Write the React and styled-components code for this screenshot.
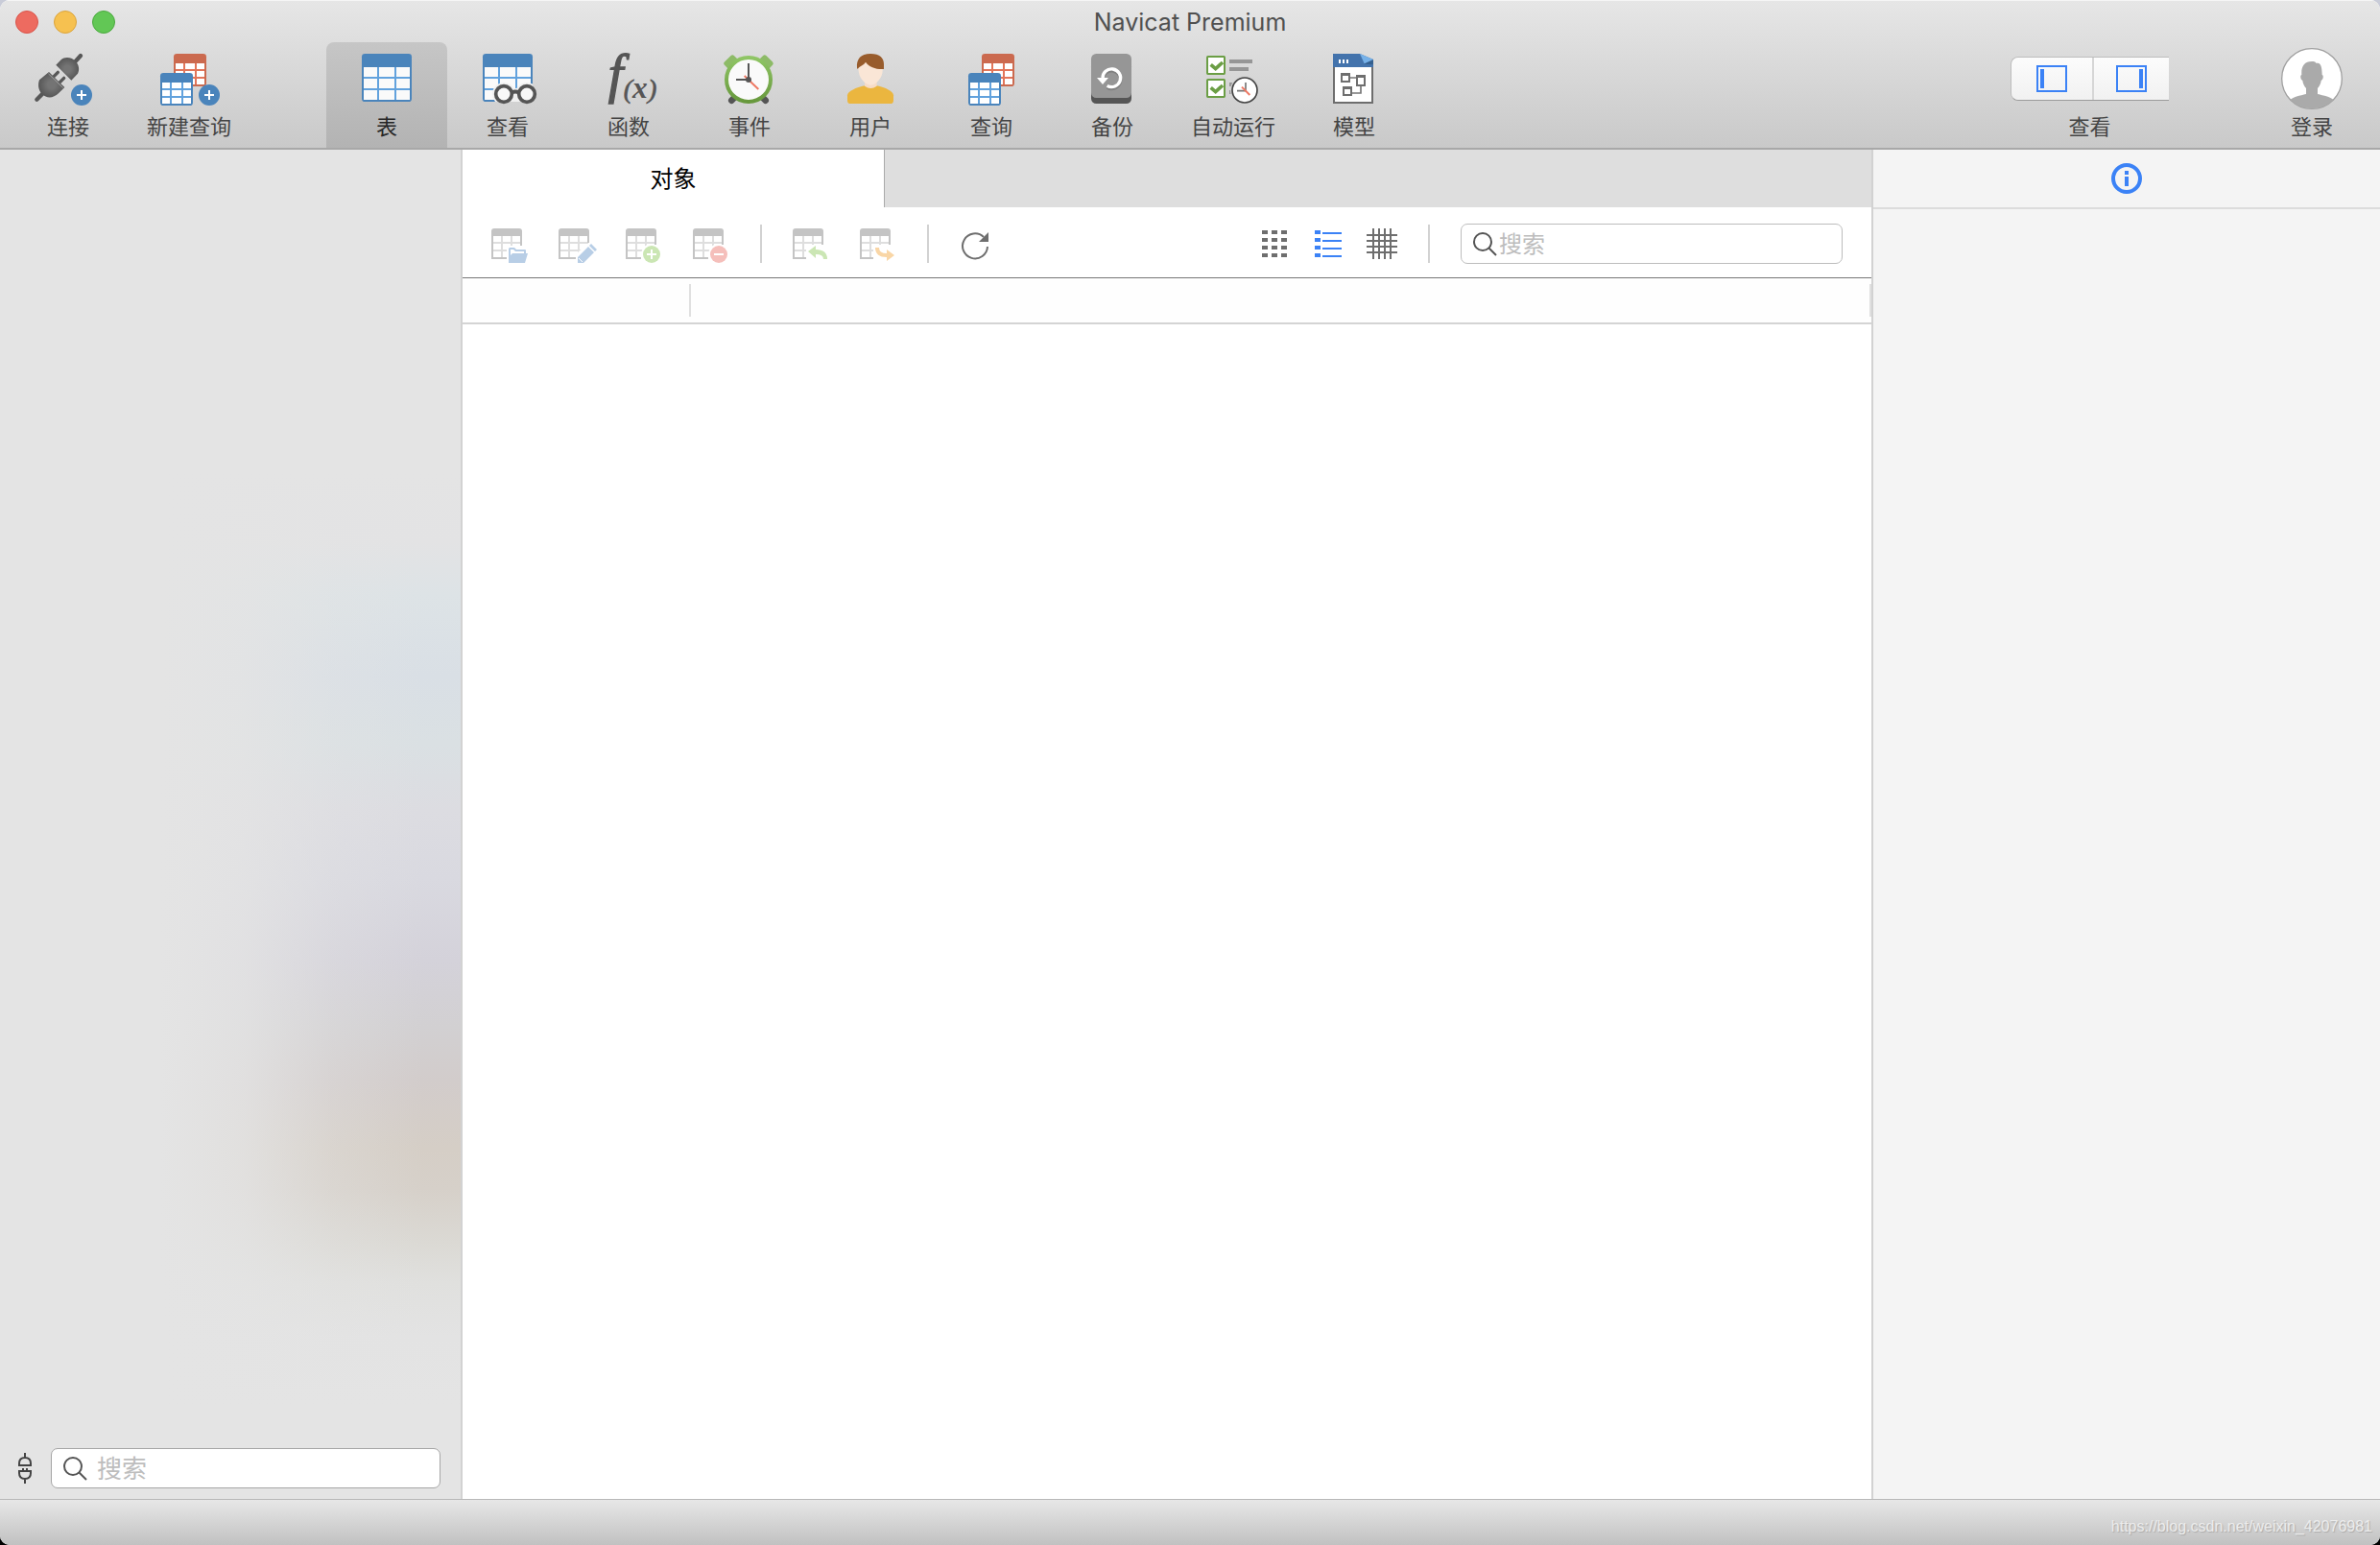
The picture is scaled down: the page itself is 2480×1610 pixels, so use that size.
import React from 'react'
import styled, { createGlobalStyle } from 'styled-components'

const GlobalStyle = createGlobalStyle`
    * { box-sizing: border-box; }
    body {
        margin: 0;
        background: linear-gradient(#c9ccd8 50%, #000 50%);
        font-family: Inter, "Noto Sans CJK SC", sans-serif;
    }
    button, input { font: inherit; }
    svg { display: block; overflow: visible; }
`

const Window = styled.div`
    min-height: 100vh;
    display: flex;
    flex-direction: column;
    background: #fff;
    border-radius: 10px;
    overflow: hidden;
`

// 顶部
const Header = styled.header`
    background: linear-gradient(#e6e6e6, #c9c9c9);
    border-top: 1px solid #f5f5f5;
    border-bottom: 2px solid #a8a8a8;
`

const TitleBar = styled.div`
    display: grid;
    grid-template-columns: 1fr auto 1fr;
    align-items: center;
    height: 43px;
    padding: 0 16px;
`

const Lights = styled.div`
    display: flex;
    gap: 16px;
`

const Light = styled.button`
    width: 24px;
    height: 24px;
    padding: 0;
    border-radius: 50%;
    border: 1px solid ${(props) => props.$edge};
    background: ${(props) => props.$color};
`

const Title = styled.h1`
    margin: 0;
    font-size: 25px;
    line-height: 32px;
    font-weight: 400;
    color: #505050;
`

const Toolbar = styled.nav`
    display: flex;
    height: 110px;
    padding: 0 8px;
`

const Space = styled.div`
    width: ${(props) => props.$width || 'auto'};
    flex: ${(props) => (props.$width ? 'none' : 1)};
`

const ToolButton = styled.button`
    display: grid;
    grid-template-rows: 72px 32px;
    justify-items: center;
    align-content: start;
    width: 126px;
    padding: 0;
    border: 0;
    border-radius: 8px 8px 0 0;
    background: ${(props) => (props.$active ? 'linear-gradient(#c6c6c6, #b3b3b3)' : 'none')};
    color: ${(props) => (props.$active ? '#262626' : '#444')};
    font-size: 22px;
    line-height: 32px;
    white-space: nowrap;
`

const ViewGroup = styled.div`
    display: grid;
    grid-template-rows: 72px 32px;
    justify-items: center;
    align-items: center;
    align-content: start;
    margin-right: 86px;
    font-size: 22px;
    line-height: 32px;
    color: #444;
`

const Segment = styled.div`
    display: flex;
    height: 46px;
    margin-top: 4px;
    border: 1px solid #bdbdbd;
    border-bottom-color: #9c9c9c;
    border-right: 0;
    border-radius: 8px 0 0 8px;
    overflow: hidden;
`

const SegmentButton = styled.button`
    display: grid;
    place-items: center;
    width: ${(props) => props.$width};
    padding: 0;
    border: 0;
    border-right: ${(props) => (props.$divided ? '2px solid #d6d6d6' : '0')};
    background: linear-gradient(#fcfcfc, #f1f1f1);
`

// 主体
const Body = styled.div`
    flex: 1;
    display: grid;
    grid-template-columns: 482px 1fr 528px;
`

const Sidebar = styled.aside`
    display: flex;
    align-items: flex-end;
    min-width: 0;
    padding: 0 21px 11px 19px;
    border-right: 2px solid #d2d2d2;
    background:
        linear-gradient(90deg, #e4e4e4 35%, rgba(228, 228, 228, 0.8) 53%, rgba(228, 228, 228, 0.3) 72%, transparent 92%),
        linear-gradient(
            #e4e4e4 24%, #e3e3e4 29%, #dde3e6 33%, #d9dfe5 39%, #dae0e3 44%, #dcdce1 49%,
            #d9d9e0 54%, #d4d2da 60%, #d2d0d2 65%, #d2cccb 69%, #d5cec6 74%, #d6d0c9 77%,
            #dbd9d4 81%, #e0e0de 84%, #e3e3e3 88%, #e4e4e4 93%
        );
`

const SidebarTools = styled.div`
    flex: 1;
    display: flex;
    align-items: center;
    gap: 20px;
    min-width: 0;
`

const PlainButton = styled.button`
    display: grid;
    place-items: center;
    flex: none;
    padding: 0;
    border: 0;
    background: none;
`

const SearchBox = styled.label`
    display: flex;
    align-items: center;
    gap: ${(props) => props.$gap};
    flex: ${(props) => (props.$width ? 'none' : 1)};
    width: ${(props) => props.$width || 'auto'};
    min-width: 0;
    height: 42px;
    padding: 0 11px;
    border: 1px solid ${(props) => props.$edge};
    border-radius: 7px;
    background: #fff;
    font-size: ${(props) => props.$size};
`

const SearchInput = styled.input`
    flex: 1;
    width: 100%;
    min-width: 0;
    height: 36px;
    padding: 0;
    border: 0;
    outline: 0;
    background: none;
    color: #333;
    &::placeholder {
        color: #bdbdbd;
        opacity: 1;
    }
`

const Center = styled.main`
    display: flex;
    flex-direction: column;
    min-width: 0;
    background: #fff;
    border-right: 2px solid #d2d2d2;
`

const Tabs = styled.div`
    display: flex;
    height: 60px;
    background: #dedede;
`

const Tab = styled.button`
    width: 440px;
    padding: 0 0 4px;
    border: 0;
    border-right: 1px solid #a9a9a9;
    background: #fff;
    color: #000;
    font-size: 24px;
`

const ObjectBar = styled.div`
    display: flex;
    align-items: center;
    gap: 32px;
    height: 74px;
    padding: 3px 30px 0;
    border-bottom: 1px solid #777;
`

const Views = styled.div`
    display: flex;
    gap: 24px;
    margin-left: auto;
`

const Divider = styled.span`
    width: 2px;
    height: 40px;
    background: #d2d2d2;
`

const ObjectTable = styled.table`
    width: 100%;
    border-collapse: collapse;
    table-layout: fixed;
`

const HeadCell = styled.th`
    width: ${(props) => props.$width || 'auto'};
    padding: 6px 0;
    border-bottom: 2px solid #d4d4d4;
    background: #fefefe;
`

const HeadLabel = styled.div`
    height: 34px;
    border-right: 2px solid #e0e0e0;
`

const InfoPanel = styled.aside`
    background: #f4f4f4;
`

const InfoHead = styled.div`
    display: grid;
    place-items: center;
    height: 62px;
    border-bottom: 2px solid #dcdcdc;
`

const Footer = styled.footer`
    display: flex;
    align-items: center;
    justify-content: flex-end;
    height: 48px;
    padding: 8px 8px 0;
    border-top: 1px solid #b8b8b8;
    background: linear-gradient(#e7e7e7, #c1c1c1);
`

const SourceLink = styled.a`
    font-family: "Liberation Sans", sans-serif;
    font-size: 16px;
    line-height: 24px;
    color: #ececec;
    text-decoration: none;
    text-shadow: 1px 1px 1px #aaa;
`

// 图标
const BigIcon = ({ children }) => (
    <svg width="64" height="72" viewBox="0 0 192 216" fill="none" aria-hidden="true">
        {children}
    </svg>
)

const BigTable = () => (
    <>
        <rect x="18" y="36" width="156" height="150" rx="10" fill="#4a84bb" />
        <path d="M24 78h144v98q0 4-4 4H28q-4 0-4-4z" fill="#62a2dd" />
        {[78, 114, 150].map((y) => (
            <path key={y} d={`M24 ${y}h42v30h-42zM72 ${y}h48v30h-48zM126 ${y}h42v30h-42z`} fill="#fafafa" />
        ))}
    </>
)

const MiniTable = ({ x, y, color, line }) => (
    <g transform={`translate(${x} ${y})`}>
        <rect width="102" height="102" rx="10" fill={color} />
        <rect x="6" y="30" width="90" height="66" fill={line} />
        {[30, 54, 78].map((r) => (
            <path key={r} d={`M6 ${r}h24v18h-24zM36 ${r}h30v18h-30zM72 ${r}h24v18h-24z`} fill="#fff" />
        ))}
    </g>
)

const PlusDot = ({ x }) => (
    <>
        <circle cx={x} cy="165" r="33" fill="#4a84bb" />
        <path d={`M${x - 15} 165h30M${x} 150v30`} stroke="#fff" strokeWidth="6" />
    </>
)

const ConnectIcon = () => (
    <BigIcon>
        <defs>
            <radialGradient id="plug">
                <stop offset="0.3" stopColor="#747474" />
                <stop offset="1" stopColor="#575757" />
            </radialGradient>
        </defs>
        <path d="M135 42l-20 22M15 162l-17 17" stroke="#575757" strokeWidth="13" strokeLinecap="round" />
        <path d="M58 71L74 55C85 45 105 46 117 58C131 70 132 88 126 98L106 119Z" fill="url(#plug)" />
        <path d="M64 94L46 112M83 112L65 130" stroke="#575757" strokeWidth="10" strokeLinecap="round" />
        <path d="M36 93L85 141L66 160C50 176 28 176 15 163C2 150 1 132 6 118Z" fill="url(#plug)" />
        <path d="M34 98L80 143" stroke="#bbb" strokeWidth="2" />
        <PlusDot x={138} />
    </BigIcon>
)

const NewQueryIcon = () => (
    <BigIcon>
        <MiniTable x={48} y={36} color="#cb6a4f" line="#e2765a" />
        <MiniTable x={6} y={96} color="#4a84bb" line="#62a2dd" />
        <PlusDot x={159} />
    </BigIcon>
)

const TableIcon = () => (
    <BigIcon>
        <BigTable />
    </BigIcon>
)

const ViewIcon = () => (
    <BigIcon>
        <clipPath id="sheet">
            <path d="M24 108h150v78H24z" />
        </clipPath>
        <BigTable />
        <g clipPath="url(#sheet)" fill="#f1f1f1">
            <circle cx="84" cy="162" r="36" />
            <circle cx="156" cy="162" r="36" />
            <path d="M84 144h90v42H84z" />
        </g>
        <path d="M110 157q10-5 20 0" stroke="#555" strokeWidth="12" />
        <circle cx="84" cy="162" r="25" fill="#f8f8f8" stroke="#555" strokeWidth="11" />
        <circle cx="156" cy="162" r="25" fill="#f8f8f8" stroke="#555" strokeWidth="11" />
    </BigIcon>
)

const FxText = styled.text`
    font-family: "Liberation Serif", serif;
    font-style: italic;
    font-weight: ${(props) => props.$weight};
    font-size: ${(props) => props.$size};
    fill: #555;
    stroke: #555;
    stroke-width: ${(props) => props.$stroke};
`

const FunctionIcon = () => (
    <BigIcon>
        <FxText x="32" y="157" $size="168px" $weight="400" $stroke="4">f</FxText>
        <FxText x="80" y="174" $size="84px" $weight="400" $stroke="2">(</FxText>
        <FxText x="108" y="174" $size="94px" $weight="700" $stroke="0">x</FxText>
        <FxText x="156" y="174" $size="84px" $weight="400" $stroke="2">)</FxText>
    </BigIcon>
)

const EventIcon = () => (
    <BigIcon>
        <defs>
            <linearGradient id="ring" x1="0" y1="0" x2="0" y2="1">
                <stop stopColor="#8fc565" />
                <stop offset="1" stopColor="#67983c" />
            </linearGradient>
        </defs>
        <path d="M54 168L40 182M132 168L146 182" stroke="#555" strokeWidth="20" strokeLinecap="round" />
        <g fill="#8dbb67">
            <rect x="16" y="48" width="42" height="26" rx="7" transform="rotate(-45 37 61)" />
            <rect x="128" y="48" width="42" height="26" rx="7" transform="rotate(45 149 61)" />
        </g>
        <circle cx="93" cy="117" r="69" fill="#fafafa" stroke="url(#ring)" strokeWidth="12" />
        <path d="M80 105L124 147" stroke="#ee7964" strokeWidth="6" />
        <path d="M93 66V117H54" stroke="#555" strokeWidth="6" />
        <circle cx="93" cy="117" r="9" fill="#555" />
    </BigIcon>
)

const UserIcon = () => (
    <BigIcon>
        <path d="M24 166C24 154 52 141 78 136H116C142 141 168 154 168 166V182Q168 192 158 192H34Q24 192 24 182Z" fill="#ebb63f" />
        <path d="M78 120V137Q97 151 116 137V120Z" fill="#f6dcc8" />
        <path d="M58 76C58 56 134 56 134 80C136 104 124 120 110 130Q97 138 84 130C68 120 58 104 58 76Z" fill="#fae6d6" />
        <path d="M54 80C52 52 66 36 96 36C126 36 138 50 138 68V84C116 86 92 78 81 62C76 72 64 72 56 84Z" fill="#985c2c" />
    </BigIcon>
)

const QueryIcon = () => (
    <BigIcon>
        <MiniTable x={66} y={36} color="#cb6a4f" line="#e2765a" />
        <MiniTable x={24} y={96} color="#4a84bb" line="#62a2dd" />
    </BigIcon>
)

const BackupIcon = () => (
    <BigIcon>
        <rect x="30" y="60" width="126" height="132" rx="16" fill="#555" />
        <rect x="30" y="36" width="126" height="138" rx="16" fill="#969696" />
        <path d="M66 117A28 28 0 1 1 80 142" stroke="#808080" strokeWidth="10" />
        <path d="M66 113A28 28 0 1 1 80 136" stroke="#fff" strokeWidth="10" />
        <path d="M48 111H84L66 132Z" fill="#fff" />
    </BigIcon>
)

const AutoIcon = () => (
    <BigIcon>
        {[42, 114].map((y) => (
            <g key={y}>
                <rect x="15" y={y + 3} width="54" height="54" rx="2" fill="#fff" stroke="#6b9e45" strokeWidth="6" />
                <path d={`M26 ${y + 28}L41 ${y + 41}L63 ${y + 21}`} stroke="#6b9e45" strokeWidth="11" />
            </g>
        ))}
        <path d="M84 60h72M84 84h60M84 132h20M84 156h20" stroke="#969696" strokeWidth="12" />
        <circle cx="132" cy="150" r="45" fill="#d3d3d3" />
        <circle cx="132" cy="150" r="39" fill="#fff" stroke="#444" strokeWidth="5" />
        <path d="M135 126V152H108" stroke="#777" strokeWidth="5" />
        <path d="M123 140L148 165" stroke="#ee7964" strokeWidth="6" />
    </BigIcon>
)

const ModelIcon = () => (
    <BigIcon>
        <path d="M33 70H153V189H33Z" fill="#fff" stroke="#6e6e6e" strokeWidth="6" />
        <path d="M30 36H114L156 54V78H30Z" fill="#4373ac" />
        <path d="M126 68L156 54V70Z" fill="#34608f" />
        <path d="M114 36L156 54L128 67Z" fill="#76b1e8" />
        <path d="M48 54h6v12h-6zM60 54h6v12h-6zM72 54h6v12h-6z" fill="#fff" />
        <path d="M84 111h20M117 138v21H90" stroke="#777" strokeWidth="5" />
        <g fill="#fff" stroke="#6e6e6e" strokeWidth="6">
            <path d="M57 99h24v24H57zM105 105h24v30h-24zM63 141h24v24H63z" />
            <path d="M57 102h24M105 108h24M63 144h24" />
        </g>
    </BigIcon>
)

const AvatarIcon = () => (
    <BigIcon>
        <clipPath id="face">
            <circle cx="96" cy="114" r="94" />
        </clipPath>
        <circle cx="96" cy="114" r="94" fill="#fff" stroke="#a0a0a0" strokeWidth="4" />
        <path
            clipPath="url(#face)"
            fill="#aaa"
            d="M20 186C36 170 60 167 78 162V144C72 137 68 130 67 120C61 118 58 104 64 102C62 76 72 60 96 60C104 60 108 62 110 66C122 62 128 74 128 102C134 104 131 118 125 120C124 130 120 137 114 144V162C132 167 156 170 172 186V216H20Z"
        />
    </BigIcon>
)

const PaneIcon = ({ bar }) => (
    <svg width="32" height="28" fill="none" aria-hidden="true">
        <rect x="1" y="1" width="30" height="26" stroke="#3b82f6" strokeWidth="2" />
        <rect x={bar} y="4" width="4" height="20" fill="#3b82f6" />
    </svg>
)

const SearchMark = styled.svg`
    flex: none;
`

const SearchIcon = () => (
    <SearchMark width="26" height="26" viewBox="0 0 26 26" fill="none" stroke="#555" strokeWidth="2" aria-hidden="true">
        <circle cx="11" cy="11" r="9" />
        <path d="M17 17l8 8" />
    </SearchMark>
)

const SmallTable = ({ cut, children }) => (
    <svg width="38" height="40" viewBox="0 -4 38 40" fill="none" aria-hidden="true">
        <path d="M11 8v23M21 8v23M1 15h30M1 23h30" stroke="#dedede" strokeWidth="2" />
        <path d="M1 6v25h30V6" stroke="#c4c4c4" strokeWidth="2" />
        <path d="M0 8V3q0-3 3-3h26q3 0 3 3v5z" fill="#c4c4c4" />
        <path d={cut} fill="#fff" />
        {children}
    </svg>
)

const dotCut = 'M16 26Q18 17 24 17h10v18H16z'

const objectActions = [
    {
        name: '打开表',
        icon: (
            <SmallTable cut="M16 18h18v16H16z">
                <path d="M18 36V21l1-1h5l2 2h9q1 0 1 1v3h2l-3 10z" fill="#b8cee6" />
                <path d="M20 28v-6h3l2 2h9v2H22z" fill="#fff" />
            </SmallTable>
        ),
    },
    {
        name: '设计表',
        icon: (
            <SmallTable cut="M18 34V27L31 15h4v19z">
                <path d="M20 36v-6L31 19l6 6-11 11zM32 18l2-2 6 6-2 2z" fill="#b8cee6" />
                <path d="M21 31l4 4" stroke="#fff" />
            </SmallTable>
        ),
    },
    {
        name: '新建表',
        icon: (
            <SmallTable cut={dotCut}>
                <circle cx="27" cy="27" r="9" fill="#cbe6b4" />
                <path d="M22 27h10M27 22v10" stroke="#fff" strokeWidth="2" />
            </SmallTable>
        ),
    },
    {
        name: '删除表',
        icon: (
            <SmallTable cut={dotCut}>
                <circle cx="27" cy="27" r="9" fill="#f5bfbb" />
                <path d="M22 27h10" stroke="#fff" strokeWidth="2" />
            </SmallTable>
        ),
    },
]

const transferActions = [
    {
        name: '导入向导',
        icon: (
            <SmallTable cut="M14 17h19v18H14z">
                <path d="M16 24l8-6v4q12 0 12 10h-4q0-5-8-5v4z" fill="#cbe6b4" />
            </SmallTable>
        ),
    },
    {
        name: '导出向导',
        icon: (
            <SmallTable cut="M14 17h19v18H14z">
                <path d="M36 28l-8-6v4q-8 0-8-6h-4q0 10 12 10v4z" fill="#f9d6a6" />
            </SmallTable>
        ),
    },
]

const tools = [
    { name: '表', Icon: TableIcon, active: true },
    { name: '查看', Icon: ViewIcon },
    { name: '函数', Icon: FunctionIcon },
    { name: '事件', Icon: EventIcon },
    { name: '用户', Icon: UserIcon },
    { name: '查询', Icon: QueryIcon },
    { name: '备份', Icon: BackupIcon },
    { name: '自动运行', Icon: AutoIcon },
    { name: '模型', Icon: ModelIcon },
]

const Tool = ({ name, Icon, active }) => (
    <ToolButton type="button" $active={active} aria-pressed={active}>
        <Icon />
        <span>{name}</span>
    </ToolButton>
)

const Search = ({ id, width, gap, size, edge }) => (
    <SearchBox htmlFor={id} $width={width} $gap={gap} $size={size} $edge={edge}>
        <SearchIcon />
        <SearchInput id={id} type="text" placeholder="搜索" aria-label="搜索" />
    </SearchBox>
)

export default function App() {
    return (
        <>
            <GlobalStyle />
            <Window>
                <Header>
                    <TitleBar>
                        <Lights>
                            <Light type="button" aria-label="关闭" $color="#ed6b60" $edge="#d9544a" />
                            <Light type="button" aria-label="最小化" $color="#f6c150" $edge="#dba43c" />
                            <Light type="button" aria-label="缩放" $color="#62c755" $edge="#4aa93e" />
                        </Lights>
                        <Title>Navicat Premium</Title>
                    </TitleBar>
                    <Toolbar>
                        <Tool name="连接" Icon={ConnectIcon} />
                        <Tool name="新建查询" Icon={NewQueryIcon} />
                        <Space $width="80px" />
                        {tools.map((tool) => (
                            <Tool key={tool.name} {...tool} />
                        ))}
                        <Space />
                        <ViewGroup>
                            <Segment>
                                <SegmentButton type="button" aria-label="左侧面板" $width="86px" $divided>
                                    <PaneIcon bar={4} />
                                </SegmentButton>
                                <SegmentButton type="button" aria-label="右侧面板" $width="78px">
                                    <PaneIcon bar={24} />
                                </SegmentButton>
                            </Segment>
                            <span>查看</span>
                        </ViewGroup>
                        <Tool name="登录" Icon={AvatarIcon} />
                    </Toolbar>
                </Header>

                <Body>
                    <Sidebar>
                        <SidebarTools>
                            <PlainButton type="button" aria-label="连接状态">
                                <svg width="14" height="32" fill="none" stroke="#444" strokeWidth="2" aria-hidden="true">
                                    <path d="M7 0v5M1 13v-2q0-6 6-6t6 6v2zM1 19h12v2q0 6-6 6t-6-6zM7 27v5M5 16v3M9 16v3" />
                                </svg>
                            </PlainButton>
                            <Search id="side-search" gap="10px" size="26px" edge="#a6a6a6" />
                        </SidebarTools>
                    </Sidebar>

                    <Center>
                        <Tabs>
                            <Tab type="button">对象</Tab>
                        </Tabs>
                        <ObjectBar>
                            {objectActions.map(({ name, icon }) => (
                                <PlainButton key={name} type="button" aria-label={name}>{icon}</PlainButton>
                            ))}
                            <Divider />
                            {transferActions.map(({ name, icon }) => (
                                <PlainButton key={name} type="button" aria-label={name}>{icon}</PlainButton>
                            ))}
                            <Divider />
                            <PlainButton type="button" aria-label="刷新">
                                <svg width="32" height="32" viewBox="0 0 32 32" fill="none" aria-hidden="true">
                                    <path d="M25 9A13 13 0 1 0 29 19" stroke="#6e6e6e" strokeWidth="2" />
                                    <path d="M30 4v10H20z" fill="#6e6e6e" />
                                </svg>
                            </PlainButton>
                            <Views>
                                <PlainButton type="button" aria-label="图标视图">
                                    <svg width="32" height="32" fill="#6e6e6e" aria-hidden="true">
                                        {[2, 10, 18, 26].map((y) => (
                                            <path key={y} d={`M3 ${y}h6v4h-6zM13 ${y}h6v4h-6zM23 ${y}h6v4h-6z`} />
                                        ))}
                                    </svg>
                                </PlainButton>
                                <PlainButton type="button" aria-label="列表视图">
                                    <svg width="32" height="32" fill="#3b82f6" aria-hidden="true">
                                        {[2, 10, 18, 26].map((y) => (
                                            <path key={y} d={`M2 ${y}h6v4h-6zM10 ${y + 2}h20v2h-20z`} />
                                        ))}
                                    </svg>
                                </PlainButton>
                                <PlainButton type="button" aria-label="ER 图表">
                                    <svg width="32" height="32" stroke="#6e6e6e" strokeWidth="2" aria-hidden="true">
                                        <path d="M7 0v32M13 0v32M19 0v32M25 0v32M0 7h32M0 13h32M0 19h32M0 25h32" />
                                    </svg>
                                </PlainButton>
                            </Views>
                            <Divider />
                            <Search id="object-search" width="398px" gap="2px" size="24px" edge="#bdbdbd" />
                        </ObjectBar>
                        <ObjectTable aria-label="对象">
                            <thead>
                                <tr>
                                    <HeadCell $width="238px"><HeadLabel /></HeadCell>
                                    <HeadCell><HeadLabel /></HeadCell>
                                </tr>
                            </thead>
                        </ObjectTable>
                    </Center>

                    <InfoPanel>
                        <InfoHead>
                            <PlainButton type="button" aria-label="信息">
                                <svg width="32" height="32" fill="none" aria-hidden="true">
                                    <circle cx="16" cy="16" r="14" stroke="#3b82f6" strokeWidth="4" />
                                    <path d="M14 8h4v4h-4zM14 14h4v10h-4z" fill="#3b82f6" />
                                </svg>
                            </PlainButton>
                        </InfoHead>
                    </InfoPanel>
                </Body>

                <Footer>
                    <SourceLink href="https://blog.csdn.net/weixin_42076981">https://blog.csdn.net/weixin_42076981</SourceLink>
                </Footer>
            </Window>
        </>
    )
}
